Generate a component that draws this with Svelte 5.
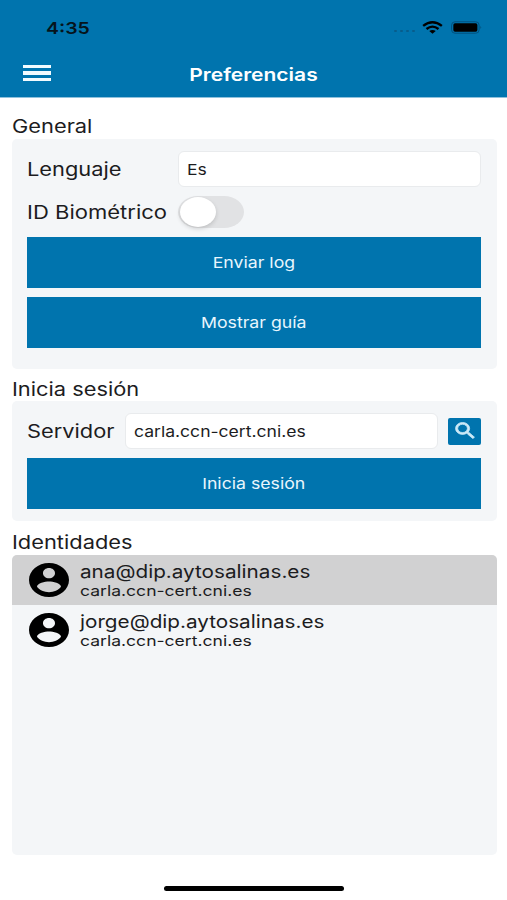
<script lang="ts">
  let language = $state("Es");
  let server = $state("carla.ccn-cert.cni.es");
  let biometric = $state(false);
  let selected = $state(0);

  const identities = [
    { email: "ana@dip.aytosalinas.es", server: "carla.ccn-cert.cni.es" },
    { email: "jorge@dip.aytosalinas.es", server: "carla.ccn-cert.cni.es" }
  ];
</script>

<div class="screen">
  <header>
    <div class="status-bar">
      <span class="wide clock">4:35</span>
      <div class="status-icons">
        <div class="dots"><i></i><i></i><i></i><i></i></div>
        <svg class="wifi" viewBox="0 0 22 14" preserveAspectRatio="none">
          <g fill="none" stroke="#000" stroke-width="2.5">
            <path d="M1.2 5.2Q11 -2.6 20.8 5.2" />
            <path d="M4.7 8.6Q11 3.5 17.3 8.6" />
          </g>
          <path d="M7.6 10.9Q11 8.300 14.4 10.9L11 13.800Z" />
        </svg>
        <svg class="battery" viewBox="0 0 33 13">
          <rect x="0.6" y="0.6" width="28.4" height="11.8" rx="3.5" fill="none" stroke="#00507c" stroke-width="1" />
          <rect x="2.4" y="2.2" width="24.8" height="8.6" rx="1.8" />
          <path d="M30.3 4.6Q32.2 6.3 30.3 8Z" fill="#00507c" />
        </svg>
      </div>
    </div>
    <div class="nav-bar">
      <button class="menu" aria-label="Menú"><i></i><i></i><i></i></button>
      <h1><span class="wide center">Preferencias</span></h1>
    </div>
  </header>

  <main>
    <h2><span class="wide">General</span></h2>
    <section class="card general">
      <div class="row">
        <span class="label"><span class="wide">Lenguaje</span></span>
        <div class="field"><span class="wide">{language}</span></div>
      </div>
      <div class="row switch-row">
        <span class="label"><span class="wide">ID Biométrico</span></span>
        <button
          class="switch"
          class:on={biometric}
          role="switch"
          aria-checked={biometric}
          aria-label="ID Biométrico"
          onclick={() => (biometric = !biometric)}
        ><i></i></button>
      </div>
      <button class="action"><span class="wide center">Enviar log</span></button>
      <button class="action"><span class="wide center">Mostrar guía</span></button>
    </section>

    <h2><span class="wide">Inicia sesión</span></h2>
    <section class="card login">
      <div class="row">
        <span class="label short"><span class="wide">Servidor</span></span>
        <div class="field"><span class="wide">{server}</span></div>
        <button class="search" aria-label="Buscar">
          <svg viewBox="2.500 2.500 18.5 18.5" preserveAspectRatio="none">
            <path d="M15.5 14h-.79l-.28-.27A6.471 6.471 0 0 0 16 9.5 6.5 6.5 0 1 0 9.5 16c1.61 0 3.09-.59 4.23-1.57l.27.28v.79l5 4.99L20.49 19l-4.99-5zm-6 0C7.01 14 5 11.99 5 9.5S7.01 5 9.5 5 14 7.01 14 9.5 11.99 14 9.5 14z" />
          </svg>
        </button>
      </div>
      <button class="action"><span class="wide center">Inicia sesión</span></button>
    </section>

    <h2 class="list-title"><span class="wide">Identidades</span></h2>
    <section class="card identities">
      {#each identities as identity, i}
        <button class="identity" class:selected={selected === i} onclick={() => (selected = i)}>
          <svg viewBox="2 2 20 20" preserveAspectRatio="none">
            <path d="M12 2C6.48 2 2 6.48 2 12s4.48 10 10 10 10-4.48 10-10S17.52 2 12 2zm0 3c1.66 0 3 1.34 3 3s-1.34 3-3 3-3-1.34-3-3 1.34-3 3-3zm0 14.2c-2.5 0-4.71-1.28-6-3.22.03-1.99 4-3.08 6-3.08 1.99 0 5.97 1.09 6 3.08-1.29 1.94-3.5 3.22-6 3.22z" />
          </svg>
          <div class="identity-text">
            <span class="wide email">{identity.email}</span>
            <span class="wide host">{identity.server}</span>
          </div>
        </button>
      {/each}
    </section>
  </main>

  <footer><div class="home-indicator"></div></footer>
</div>

<style>
  :global(body) {
    background: #fff;
  }

  .screen {
    --blue: #0074ae;
    --card: #f4f6f8;
    width: 507px;
    height: 900px;
    display: flex;
    flex-direction: column;
    overflow: hidden;
    background: #fff;
    color: #1c1c1e;
    font-family: Inter, "Liberation Sans", sans-serif;
  }

  .screen * {
    box-sizing: border-box;
  }

  button {
    padding: 0;
    border: 0;
    background: none;
    color: inherit;
    font-family: inherit;
    cursor: pointer;
  }

  svg {
    display: block;
  }

  /* Extended letter shapes */
  .wide {
    display: inline-block;
    white-space: nowrap;
    transform: scaleX(1.18);
    transform-origin: left center;
  }

  .wide.center {
    transform-origin: center;
  }

  header {
    height: 98px;
    flex: none;
    background: var(--blue);
    border-bottom: 1px solid #8fc1dc;
  }

  .status-bar {
    height: 54px;
    padding: 0 24px 0 46px;
    display: flex;
    align-items: center;
    justify-content: space-between;
  }

  .clock {
    padding-top: 1px;
    color: #06141c;
    font-size: 16.5px;
    font-weight: 600;
  }

  .status-icons {
    display: flex;
    align-items: center;
  }

  .dots {
    display: flex;
    gap: 3px;
    margin: 8px 7px 0 0;
  }

  .dots i {
    width: 3px;
    height: 2px;
    border-radius: 1px;
    background: #075d8b;
  }

  .wifi {
    width: 21px;
    height: 13px;
    margin-right: 8px;
  }

  .battery {
    width: 32px;
    height: 13px;
  }

  .nav-bar {
    height: 43px;
    padding: 0 22px 0 23px;
    display: grid;
    grid-template-columns: 28px 1fr 29px;
    align-items: center;
    color: #fff;
  }

  .menu {
    display: flex;
    flex-direction: column;
    gap: 3px;
    margin-bottom: 5px;
  }

  .menu i {
    width: 28px;
    height: 3.5px;
    background: #f2fbff;
  }

  h1 {
    margin: 0 0 3px;
    font-size: 17.5px;
    font-weight: 600;
    text-align: center;
  }

  h1 .wide {
    transform: scaleX(1.2);
  }

  main {
    flex: 1;
    padding: 0 10px 0 12px;
  }

  h2 {
    height: 32px;
    margin: 0;
    padding-top: 7px;
    font-size: 18.5px;
    font-weight: 400;
    line-height: 26px;
  }

  h2:first-child {
    height: 41px;
    padding-top: 15px;
  }

  h2.list-title {
    height: 34px;
    padding-top: 8px;
  }

  .card {
    background: var(--card);
    border-radius: 5px;
    padding: 12px 16px 0 15px;
  }

  .general {
    height: 230px;
  }

  .login {
    height: 120px;
  }

  .identities {
    height: 300px;
    padding: 0;
    overflow: hidden;
  }

  .row {
    display: flex;
    align-items: center;
    height: 36px;
    margin-bottom: 9px;
  }

  .switch-row {
    height: 32px;
  }

  .label {
    width: 151px;
    flex: none;
    font-size: 18.5px;
  }

  .switch-row .wide {
    transform: scaleX(1.19);
  }

  .label.short {
    width: 98px;
  }

  .field {
    flex: 1;
    height: 36px;
    padding-left: 8px;
    display: flex;
    align-items: center;
    background: #fff;
    border: 1px solid #e9ebed;
    border-radius: 6px;
    font-size: 15px;
  }

  .field .wide {
    transform: scaleX(1.17);
  }

  .switch {
    width: 66px;
    height: 32px;
    padding: 1px 2px;
    display: flex;
    background: #e1e2e4;
    border-radius: 20px / 16px;
  }

  .switch.on {
    justify-content: flex-end;
    background: var(--blue);
  }

  .switch i {
    width: 36px;
    height: 30px;
    border-radius: 18px / 15px;
    background: #fff;
    box-shadow: 0 2px 4px #00000026;
  }

  .action {
    width: 100%;
    height: 51px;
    margin-bottom: 9px;
    display: flex;
    align-items: center;
    justify-content: center;
    background: var(--blue);
    color: #e9f6fd;
    font-size: 15px;
  }

  .search {
    width: 33px;
    height: 27px;
    margin-left: 10px;
    display: flex;
    align-items: center;
    justify-content: center;
    background: var(--blue);
    border-radius: 2px;
  }

  .search svg {
    width: 20px;
    height: 17px;
    margin-bottom: 1px;
    fill: #cdeaf8;
    stroke: #cdeaf8;
    stroke-width: 0.8;
  }

  .identity {
    width: 100%;
    height: 50px;
    padding-left: 17px;
    display: flex;
    align-items: center;
    gap: 11px;
    text-align: left;
  }

  .identity.selected {
    background: #d1d1d2;
  }

  .identity svg {
    width: 40px;
    height: 34px;
    fill: #000;
  }

  .identity-text {
    display: flex;
    flex-direction: column;
    align-items: flex-start;
  }

  .email {
    font-size: 18px;
    line-height: 21px;
    transform: scaleX(1.15);
  }

  .host {
    font-size: 14.5px;
    line-height: 18px;
    transform: scaleX(1.21);
  }

  footer {
    height: 14px;
    display: flex;
    justify-content: center;
  }

  .home-indicator {
    width: 180px;
    height: 5px;
    border-radius: 3px;
    background: #000;
  }
</style>
